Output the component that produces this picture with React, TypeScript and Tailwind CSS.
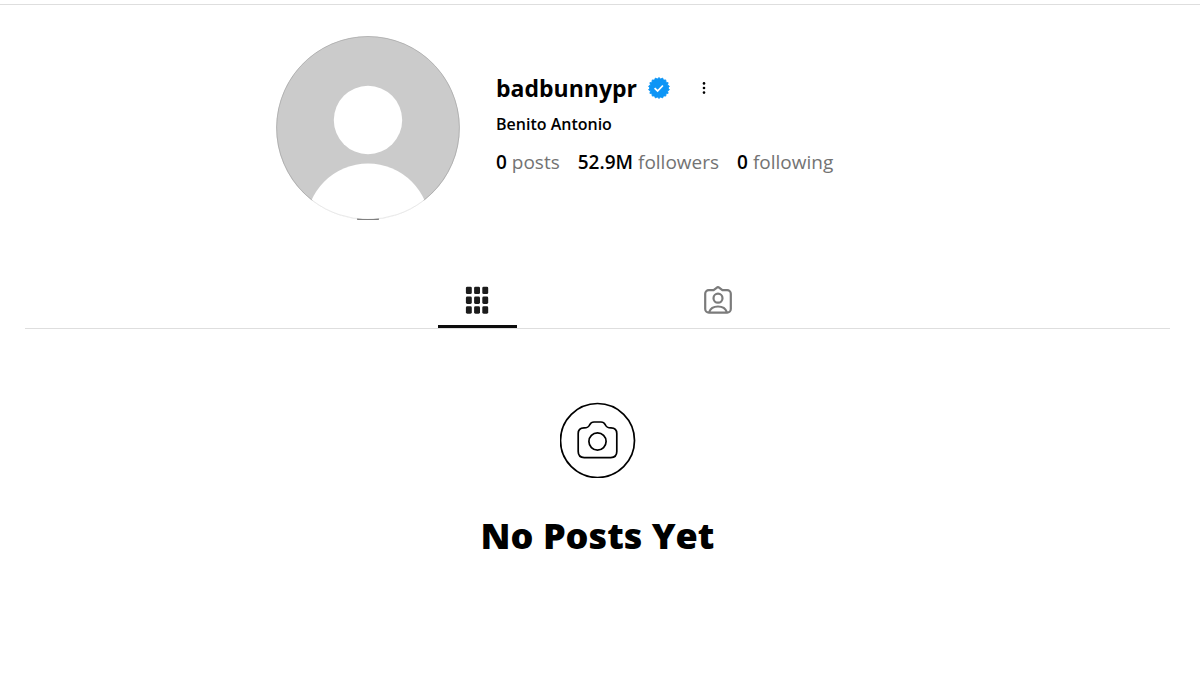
interface Stat {
  value: string;
  label: string;
}

const stats: Stat[] = [
  { value: "0", label: "posts" },
  { value: "52.9M", label: "followers" },
  { value: "0", label: "following" },
];

const cells = [0, 1, 2];

// 18 rounded teeth around the badge
const badgePoints = Array.from({ length: 36 }, (_, i) => {
  const radius = i % 2 === 0 ? 10.6 : 9.1;
  const angle = (i * Math.PI) / 18;
  return `${(11 + radius * Math.sin(angle)).toFixed(2)},${(11 - radius * Math.cos(angle)).toFixed(2)}`;
}).join(" ");

function Avatar() {
  return (
    <svg viewBox="0 0 184 184" className="size-46 shrink-0" role="img" aria-label="Profile picture">
      <defs>
        <clipPath id="avatar">
          <circle cx="92" cy="92" r="91.7" />
        </clipPath>
      </defs>
      <circle cx="92" cy="92" r="91.3" fill="none" stroke="#e4e4e4" strokeWidth="1" />
      <g clipPath="url(#avatar)">
        <path d="M0 0h184v165.5H0z" fill="#cbcbcb" />
        <circle cx="92" cy="84" r="34.2" fill="#fff" />
        <circle cx="92" cy="189.5" r="62" fill="#fff" />
      </g>
      <path
        d="M36.9 164.8A91.4 91.4 0 1 1 147.1 164.8"
        fill="none"
        stroke="#000"
        strokeOpacity="0.14"
        strokeWidth="1"
      />
      <path d="M37 164.9A91.4 91.4 0 0 0 147 164.9" fill="none" stroke="#e6e6e6" strokeWidth="0.9" />
      <path d="M81 183.1q11 1.2 22 0" fill="none" stroke="#808080" strokeWidth="1.3" />
    </svg>
  );
}

function VerifiedBadge() {
  return (
    <svg viewBox="0 0 22 22" className="size-[22px]" role="img" aria-label="Verified">
      <polygon points={badgePoints} fill="#0d95f6" stroke="#0d95f6" strokeWidth="0.8" strokeLinejoin="round" />
      <path d="M6.6 11.2l3 2.8 5.3-5.5" fill="none" stroke="#fff" strokeWidth="1.8" />
    </svg>
  );
}

function GridIcon() {
  return (
    <svg viewBox="0 0 24 28" className="h-7 w-6" fill="#1c1c1c">
      {cells.map((row) =>
        cells.map((col) => (
          <rect key={`${row}-${col}`} x={0.9 + col * 8.2} y={0.7 + row * 9.8} width="5.9" height="7.4" rx="1.4" />
        ))
      )}
    </svg>
  );
}

function TaggedIcon() {
  return (
    <svg viewBox="0 0 28 28" className="size-7" fill="none" stroke="#7b7b7b" strokeWidth="2.2" strokeLinejoin="round">
      <path d="M9.6 4.2 12.6 1.8a2.2 2.2 0 0 1 2.8 0l3 2.4h4.8a3.6 3.6 0 0 1 3.6 3.6v15.2a3.6 3.6 0 0 1-3.6 3.6H4.8a3.6 3.6 0 0 1-3.6-3.6V7.8a3.6 3.6 0 0 1 3.6-3.6z" />
      <circle cx="14" cy="12.2" r="4.5" />
      <path d="M5.2 26.2c1.2-3.8 4.6-5.7 8.8-5.7s7.6 1.9 8.8 5.7" />
    </svg>
  );
}

function CameraIcon() {
  return (
    <svg viewBox="0.5 -0.5 76 76" className="size-19" fill="none" stroke="#000" strokeWidth="1.7">
      <circle cx="38" cy="38" r="37" />
      <path d="M24.5 25.3c3.6 0 4.6-.7 5.8-3.2 1-2 2-2.6 4.2-2.6h7c2.2 0 3.2.6 4.2 2.6 1.2 2.5 2.2 3.2 5.8 3.2 3.6 0 5.8 2.2 5.8 5.8v18c0 3.8-2.2 6-6 6H24.7c-3.8 0-6-2.2-6-6v-18c0-3.6 2.2-5.8 5.8-5.8z" />
      <circle cx="38" cy="39" r="8.6" />
    </svg>
  );
}

function App() {
  return (
    <div className="min-h-screen bg-white pt-1 font-['Open_Sans',sans-serif] text-black">
      <main className="border-t border-[#dedede] pt-[31px] pr-[30px] pl-[25px]">
        <header className="mx-auto flex max-w-[643px] items-center gap-9">
          <Avatar />
          <div className="flex flex-col pb-2">
            <div className="flex items-center">
              <h1 className="text-[23px] leading-8 font-bold">badbunnypr</h1>
              <span className="ml-[11px]">
                <VerifiedBadge />
              </span>
              <button type="button" aria-label="Options" className="ml-6 p-1">
                <svg viewBox="0 0 12 12" className="size-3" fill="#000">
                  <circle cx="6" cy="1.4" r="1.3" />
                  <circle cx="6" cy="6" r="1.3" />
                  <circle cx="6" cy="10.6" r="1.3" />
                </svg>
              </button>
            </div>
            <p className="mt-2 text-base leading-6 font-semibold">Benito Antonio</p>
            <ul className="mt-3 flex gap-[18px] text-[19px] leading-7">
              {stats.map((stat) => (
                <li key={stat.label} className="text-[#737373]">
                  <span className="font-semibold text-black">{stat.value}</span> {stat.label}
                </li>
              ))}
            </ul>
          </div>
        </header>

        <nav className="mt-14 flex justify-center gap-[162px] border-b border-[#dedede]">
          <a
            href="#posts"
            aria-label="Posts"
            className="flex w-[79px] justify-center border-b-3 border-[#0c0c0c] pt-[10px] pb-[11px]"
          >
            <GridIcon />
          </a>
          <a
            href="#tagged"
            aria-label="Tagged"
            className="flex w-[79px] justify-center border-b-3 border-transparent pt-[10px] pb-[11px]"
          >
            <TaggedIcon />
          </a>
        </nav>

        <section className="flex flex-col items-center pt-[73px]">
          <CameraIcon />
          <h2 className="mt-[34px] text-4xl leading-12 font-extrabold">No Posts Yet</h2>
        </section>
      </main>
    </div>
  );
}

export default App;
